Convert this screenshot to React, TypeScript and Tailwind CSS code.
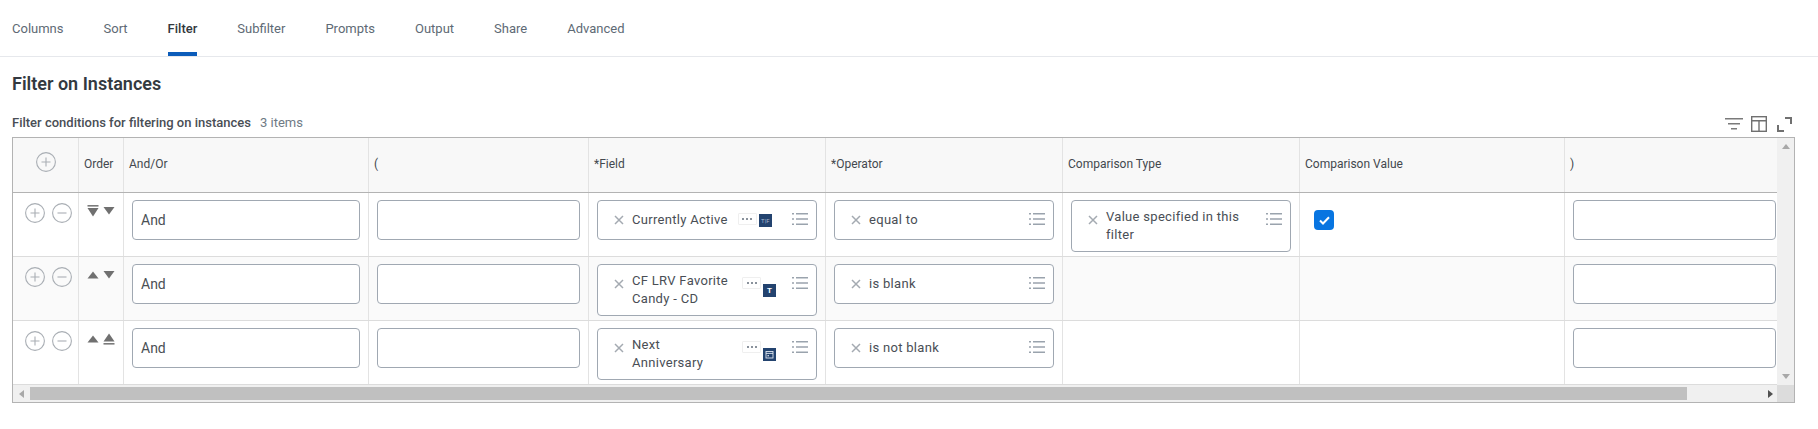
import React from "react";

const font = { fontFamily: "Roboto, 'Liberation Sans', sans-serif" };

function CircleBtn({ minus }: { minus?: boolean }) {
  return (
    <svg width="20" height="20" viewBox="0 0 20 20" fill="none" className="shrink-0">
      <circle cx="10" cy="10" r="9.4" stroke="#a9aeb4" strokeWidth="1.1" />
      <path d={minus ? "M5.5 10h9" : "M5.5 10h9M10 5.5v9"} stroke="#a9aeb4" strokeWidth="1.1" />
    </svg>
  );
}

function Arrow({ dir, bar }: { dir: "up" | "down"; bar?: boolean }) {
  if (dir === "down") {
    return (
      <svg width="12" height="12" viewBox="0 0 12 12" className="shrink-0">
        {bar && <rect x="0.5" y="0" width="11" height="1.6" fill="#7b7b7b" />}
        <path d={bar ? "M0.5 3H11.5L6 11.5Z" : "M0.5 2H11.5L6 9.5Z"} fill="#707070" />
      </svg>
    );
  }
  return (
    <svg width="12" height="12" viewBox="0 0 12 12" className="shrink-0">
      <path d={bar ? "M6 0.5L11.5 8.5H0.5Z" : "M6 2.5L11.5 9.5H0.5Z"} fill="#707070" />
      {bar && <rect x="0.5" y="10" width="11" height="1.6" fill="#7b7b7b" />}
    </svg>
  );
}

function XIcon() {
  return (
    <svg width="10" height="10" viewBox="0 0 10 10" className="shrink-0">
      <path d="M1 1l8 8M9 1l-8 8" stroke="#a4aab1" strokeWidth="1.5" />
    </svg>
  );
}

function ListIcon() {
  return (
    <svg width="16" height="12" viewBox="0 0 16 12" className="shrink-0">
      <path
        d="M0 0h2v1.6H0zM4 0h12v1.6H4zM0 5.2h2v1.6H0zM4 5.2h12v1.6H4zM0 10.4h2V12H0zM4 10.4h12V12H4z"
        fill="#9aa3ad"
      />
    </svg>
  );
}

function Badge({ kind }: { kind: "tf" | "t" | "cal" }) {
  return (
    <div className="w-[13px] h-[13px] bg-[#23436f] flex items-center justify-center shrink-0">
      {kind === "cal" ? (
        <svg width="9" height="9" viewBox="0 0 9 9" fill="none">
          <rect x="1" y="1.5" width="7" height="6.5" stroke="#dfe6ef" strokeWidth="0.9" />
          <path d="M1 3.4h7" stroke="#dfe6ef" strokeWidth="0.9" />
          <rect x="2.5" y="5" width="1.4" height="1.4" fill="#dfe6ef" />
        </svg>
      ) : kind === "t" ? (
        <span className="text-white text-[8px] leading-none font-bold">T</span>
      ) : (
        <span className="text-[#a9b9cf] text-[6px] leading-none">T|F</span>
      )}
    </div>
  );
}

function Dots() {
  return (
    <div className="w-[19px] h-[12px] border border-[#efefef] rounded-[1px] flex items-center justify-center gap-[2px] shrink-0">
      <span className="w-[2px] h-[2px] bg-[#8a929c]" />
      <span className="w-[2px] h-[2px] bg-[#8a929c]" />
      <span className="w-[2px] h-[2px] bg-[#8a929c]" />
    </div>
  );
}

function TextInput({ text, w }: { text?: string; w: string }) {
  return (
    <div className={`h-[40px] ${w} bg-white border border-[#a0a8b2] rounded-[4px] flex items-center pl-[8px] text-[14px] text-[#4a4f55]`}>
      {text}
    </div>
  );
}

function Chip({ lines, children, tall }: { lines: string[]; children?: React.ReactNode; tall?: boolean }) {
  return (
    <div className={`w-[220px] ${tall ? "h-[52px]" : "h-[40px]"} bg-white border border-[#a0a8b2] rounded-[4px] flex pl-[16px] pr-[8px]`}>
      <div className="w-[18px] h-[38px] flex items-center shrink-0">
        <XIcon />
      </div>
      <div className="h-full flex flex-col justify-center text-[13px] leading-[18px] tracking-[0.3px] text-[#494e55] whitespace-nowrap">
        {lines.map((l) => (
          <div key={l}>{l}</div>
        ))}
      </div>
      {children}
      <div className="ml-auto mt-[12px]">
        <ListIcon />
      </div>
    </div>
  );
}

function FieldExtras({ kind, left, second }: { kind: "tf" | "t" | "cal"; left: string; second?: boolean }) {
  return (
    <div className={`flex items-start gap-[2px] shrink-0 mt-[12px] ${left}`}>
      <Dots />
      <div className={second ? "mt-[7px]" : "mt-[1px]"}>
        <Badge kind={kind} />
      </div>
    </div>
  );
}

const gridCols = "grid grid-cols-[66px_45px_245px_220px_237px_237px_237px_265px_212px]";
const cell = "border-r border-[#e3e3e3] pl-[8px] pt-[7px]";

function Row({
  idx,
  field,
  op,
  bg,
  up,
  down,
}: {
  idx: number;
  field: React.ReactNode;
  op: string;
  bg: string;
  up: boolean;
  down: boolean;
}) {
  return (
    <div className={`${gridCols} h-[64px] border-b border-[#dcdcdc] ${bg}`}>
      <div className="border-r border-[#e3e3e3] pt-[10px] pl-[12px] flex gap-[7px]">
        <CircleBtn />
        <CircleBtn minus />
      </div>
      <div className="border-r border-[#e3e3e3] pt-[12px] pl-[8px] flex gap-[4px] items-start">
        <Arrow dir={up ? "up" : "down"} bar={!up} />
        <Arrow dir={down ? "down" : "up"} bar={!down} />
      </div>
      <div className={cell}>
        <TextInput text="And" w="w-[228px]" />
      </div>
      <div className={cell}>
        <TextInput w="w-[203px]" />
      </div>
      <div className={cell}>{field}</div>
      <div className={cell}>
        <Chip lines={[op]} />
      </div>
      <div className={cell}>
        {idx === 0 && <Chip lines={["Value specified in this", "filter"]} tall />}
      </div>
      <div className="border-r border-[#e3e3e3] pl-[14px] pt-[7px]">
        {idx === 0 && (
          <div className="w-[20px] h-[20px] mt-[10px] rounded-[4px] bg-[#0875e1] flex items-center justify-center">
            <svg width="11" height="9" viewBox="0 0 11 9" fill="none">
              <path d="M1 4.5l3 3L10 1.2" stroke="#fff" strokeWidth="2" />
            </svg>
          </div>
        )}
      </div>
      <div className="pl-[8px] pt-[7px]">
        <TextInput w="w-[203px]" />
      </div>
    </div>
  );
}

const tabs = ["Columns", "Sort", "Filter", "Subfilter", "Prompts", "Output", "Share", "Advanced"];

export default function App() {
  return (
    <div className="w-[1818px] h-[429px] bg-white overflow-hidden" style={font}>
      <div className="h-[57px] border-b border-[#e6e8ec] flex pl-[12px] gap-[40px]">
        {tabs.map((t) => (
          <div
            key={t}
            className={`h-[56px] pt-[20px] text-[13px] leading-[18px] ${
              t === "Filter" ? "text-[#33383e] font-medium border-b-4 border-[#0b5cba]" : "text-[#5e6a75]"
            }`}
          >
            {t}
          </div>
        ))}
      </div>

      <div className="pl-[12px] pt-[17px] text-[18px] leading-[20px] font-semibold text-[#333940]">Filter on Instances</div>

      <div className="flex items-end h-[26px] mt-[11px] pl-[12px] pr-[26px]">
        <span className="text-[13px] leading-[18px] font-medium text-[#494e55] mb-[-1px]">Filter conditions for filtering on instances</span>
        <span className="text-[13px] leading-[18px] text-[#6f7a85] ml-[9px] mb-[-1px]">3 items</span>
        <div className="ml-auto flex items-center gap-[8px] mb-[-1px]">
          <svg width="18" height="14" viewBox="0 0 18 14">
            <path d="M0 1h18v1.4H0zM3 6h12v1.4H3zM6 11h6v1.4H6z" fill="#7a7a7a" />
          </svg>
          <svg width="16" height="16" viewBox="0 0 16 16" fill="none">
            <rect x="0.7" y="0.7" width="14.6" height="14.6" stroke="#707070" strokeWidth="1.4" />
            <path d="M0.7 4.7h14.6M8 4.7v10.6" stroke="#707070" strokeWidth="1.4" />
          </svg>
          <svg width="15" height="15" viewBox="0 0 15 15" className="ml-[2px]">
            <path d="M8 0h7v7h-2V2H8zM0 8h2v5h5v2H0z" fill="#707070" />
          </svg>
        </div>
      </div>

      <div className="ml-[12px] mt-[6px] w-[1783px] h-[266px] border border-[#b3b3b3] flex flex-col overflow-hidden">
        <div className="flex flex-1 min-h-0">
          <div className="w-[1764px] overflow-hidden">
            <div className={`${gridCols} h-[55px] border-b border-[#b3b3b3] bg-[#f8f8f8] text-[12px] text-[#43484e] leading-[16px]`}>
              <div className="border-r border-[#e3e3e3] flex justify-center pt-[14px]">
                <CircleBtn />
              </div>
              {["Order", "And/Or", "(", "*Field", "*Operator", "Comparison Type", "Comparison Value", ")"].map((h, i) => (
                <div key={h} className={`${i < 7 ? "border-r border-[#e3e3e3]" : ""} flex items-center pl-[5px] pb-[2px]`}>
                  {h}
                </div>
              ))}
            </div>
            <Row
              idx={0}
              bg="bg-white"
              up={false}
              down
              op="equal to"
              field={
                <Chip lines={["Currently Active"]}>
                  <FieldExtras kind="tf" left="ml-[10px]" />
                </Chip>
              }
            />
            <Row
              idx={1}
              bg="bg-[#fafafa]"
              up
              down
              op="is blank"
              field={
                <Chip lines={["CF LRV Favorite", "Candy - CD"]} tall>
                  <FieldExtras kind="t" left="ml-[14px]" second />
                </Chip>
              }
            />
            <Row
              idx={2}
              bg="bg-white"
              up
              down={false}
              op="is not blank"
              field={
                <Chip lines={["Next", "Anniversary"]} tall>
                  <FieldExtras kind="cal" left="ml-[39px]" second />
                </Chip>
              }
            />
          </div>
          <div className="w-[17px] bg-[#f0f0f0] flex flex-col items-center justify-between py-[6px]">
            <svg width="8" height="5" viewBox="0 0 8 5">
              <path d="M4 0l4 5H0z" fill="#a8a8a8" />
            </svg>
            <svg width="8" height="5" viewBox="0 0 8 5">
              <path d="M0 0h8L4 5z" fill="#a8a8a8" />
            </svg>
          </div>
        </div>
        <div className="h-[17px] flex bg-[#f0f0f0] shrink-0">
          <div className="w-[17px] flex items-center justify-center">
            <svg width="5" height="8" viewBox="0 0 5 8">
              <path d="M5 0v8L0 4z" fill="#a8a8a8" />
            </svg>
          </div>
          <div className="w-[1657px] h-[13px] mt-[2px] bg-[#c0c0c0]" />
          <div className="flex-1 flex items-center justify-end pr-[4px]">
            <svg width="5" height="8" viewBox="0 0 5 8">
              <path d="M0 0v8l5-4z" fill="#505050" />
            </svg>
          </div>
          <div className="w-[17px] bg-[#dcdcdc]" />
        </div>
      </div>
    </div>
  );
}
